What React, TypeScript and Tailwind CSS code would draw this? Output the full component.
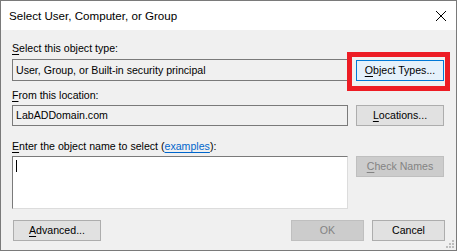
import React from "react";

const font = { fontFamily: '"Liberation Sans", Arial, sans-serif' };

function Btn({
  children,
  className = "",
  variant = "normal",
}: {
  children: React.ReactNode;
  className?: string;
  variant?: "normal" | "focus" | "disabled";
}) {
  const v =
    variant === "focus"
      ? "bg-[#e5f1fb] border-[#0078d7] text-black"
      : variant === "disabled"
      ? "bg-[#cccccc] border-[#bfbfbf] text-[#838383]"
      : "bg-[#e1e1e1] border-[#adadad] text-black";
  return (
    <div
      className={`flex items-center justify-center border h-[21px] text-[10.6px] leading-[13px] ${v} ${className}`}
    >
      {children}
    </div>
  );
}

export default function App() {
  return (
    <div
      className="relative w-[457px] h-[251px] border border-[#7a7a7a] bg-[#f0f0f0] flex flex-col text-black"
      style={font}
    >
      {/* Title bar */}
      <div className="h-[29px] bg-white flex items-center justify-between shrink-0">
        <div className="pl-[8px] text-[11.6px] leading-[14px] pt-[1px]">
          Select User, Computer, or Group
        </div>
        <svg width="12" height="12" viewBox="0 0 12 12" className="mr-[9px]">
          <path d="M1 1 L11 11 M11 1 L1 11" stroke="#000" strokeWidth="1" />
        </svg>
      </div>

      {/* Body */}
      <div className="flex-1 flex flex-col pl-[11px] pr-[11px] pt-[12px] text-[10.6px] leading-[13px]">
        <div>
          <span className="underline underline-offset-[2px]">S</span>elect this object type:
        </div>
        <div className="flex gap-[8px] mt-[4px]">
          <div className="w-[336px] h-[22px] border border-[#7a7a7a] bg-[#f0f0f0] flex items-center pl-[3px]">
            User, Group, or Built-in security principal
          </div>
          <Btn variant="focus" className="w-[88px] mt-[1px]">
            <span className="underline underline-offset-[2px]">O</span>bject Types...
          </Btn>
        </div>

        <div className="mt-[8px]">
          <span className="underline underline-offset-[2px]">F</span>rom this location:
        </div>
        <div className="flex gap-[8px] mt-[3px]">
          <div className="w-[336px] h-[21px] border border-[#7a7a7a] bg-[#f0f0f0] flex items-center pl-[3px]">
            LabADDomain.com
          </div>
          <Btn className="w-[88px]">
            <span className="underline underline-offset-[2px]">L</span>ocations...
          </Btn>
        </div>

        <div className="mt-[14px]">
          <span className="underline underline-offset-[2px]">E</span>nter the object name to select (
          <span className="text-[#0066cc] underline underline-offset-[2px]">examples</span>):
        </div>
        <div className="flex gap-[8px] mt-[3px]">
          <div className="w-[336px] h-[53px] border border-[#7a7a7a] border-r-[#dcdcdc] border-b-[#dcdcdc] bg-white pl-[3px] pt-[3px]">
            <div className="w-[1px] h-[12px] bg-black" />
          </div>
          <Btn variant="disabled" className="w-[88px]">
            <span className="underline underline-offset-[2px]">C</span>heck Names
          </Btn>
        </div>

        <div className="flex mt-[11px] items-start">
          <Btn className="w-[88px] ml-[1px]">
            <span className="underline underline-offset-[2px]">A</span>dvanced...
          </Btn>
          <div className="flex-1" />
          <Btn variant="disabled" className="w-[73px]">
            OK
          </Btn>
          <Btn className="w-[73px] ml-[8px]">Cancel</Btn>
        </div>
      </div>

      {/* Resize grip */}
      <svg
        width="10"
        height="10"
        viewBox="0 0 10 10"
        className="absolute right-[1px] bottom-[1px]"
      >
        <rect x="7" y="1" width="2" height="2" fill="#bdbdbd" />
        <rect x="4" y="4" width="2" height="2" fill="#bdbdbd" />
        <rect x="7" y="4" width="2" height="2" fill="#bdbdbd" />
        <rect x="1" y="7" width="2" height="2" fill="#bdbdbd" />
        <rect x="4" y="7" width="2" height="2" fill="#bdbdbd" />
        <rect x="7" y="7" width="2" height="2" fill="#bdbdbd" />
      </svg>

      {/* Red annotation rectangle */}
      <div className="absolute left-[346px] top-[51px] w-[103px] h-[39px] border-[5px] border-[#ed1c24]" />
    </div>
  );
}
